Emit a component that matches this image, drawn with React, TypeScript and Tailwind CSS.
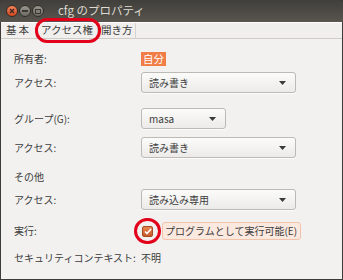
import type { ReactNode } from 'react';

const FONT = { fontFamily: '"Noto Sans CJK JP", "Noto Sans", sans-serif' };

function Dropdown({ value, width }: { value: string; width: string }) {
    return (
        <div
            className={`${width} h-[21px] flex items-center justify-between pl-[7px] pr-[9px] rounded-[3px] border border-[#bdb9b4] bg-gradient-to-b from-[#fbfbfa] to-[#ecebe9] shadow-[0_1px_0_rgba(255,255,255,0.8)]`}
        >
            <span className="text-[10px] text-[#3c3c3c] leading-none whitespace-nowrap">{value}</span>
            <svg width="7" height="4" viewBox="0 0 7 4">
                <path d="M0 0h7L3.5 4z" fill="#3a3a3a" />
            </svg>
        </div>
    );
}

function Row({ label, children, className = '' }: { label: string; children?: ReactNode; className?: string }) {
    return (
        <div className={`flex items-center ${className}`}>
            <span className="w-[127px] shrink-0 text-[10px] text-[#3c3c3c] leading-none whitespace-nowrap">{label}</span>
            {children}
        </div>
    );
}

export default function App() {
    return (
        <div style={FONT} className="relative w-[343px] h-[280px] bg-[#3c3b37] p-[1px] pt-0 overflow-hidden">
            {/* title bar */}
            <div className="h-[22px] flex items-center bg-gradient-to-b from-[#403f3b] to-[#58554e] rounded-t-[4px] -mx-[1px] px-[6px]">
                <div className="flex items-center gap-[1px]">
                    <span className="w-[12px] h-[12px] rounded-full bg-gradient-to-b from-[#f5845a] to-[#d2461c] border border-[#3a2a22] flex items-center justify-center">
                        <svg width="6" height="6" viewBox="0 0 6 6">
                            <path d="M1 1l4 4M5 1L1 5" stroke="#3b2a22" strokeWidth="1.4" />
                        </svg>
                    </span>
                    <span className="w-[12px] h-[12px] rounded-full bg-gradient-to-b from-[#9a968d] to-[#6d6a63] border border-[#2f2e2b] flex items-center justify-center">
                        <span className="w-[6px] h-[1.5px] bg-[#3a3935]" />
                    </span>
                    <span className="w-[12px] h-[12px] rounded-full bg-gradient-to-b from-[#9a968d] to-[#6d6a63] border border-[#2f2e2b] flex items-center justify-center">
                        <span className="w-[6px] h-[5px] border border-[#3a3935]" />
                    </span>
                </div>
                <span className="ml-[14px] text-[11.5px] text-[#dfdbd2] leading-none">cfg のプロパティ</span>
            </div>

            <div className="h-[257px] bg-[#f2f1f0] flex flex-col">
                {/* tabs */}
                <div className="h-[17px] flex items-center border-t border-white border-b border-b-[#cfccc8] bg-[#f0efed]">
                    <span className="px-[5px] text-[10.5px] text-[#3c3c3c] leading-none tracking-[2px]">基本</span>
                    <span className="w-px h-full bg-[#d6d3cf]" />
                    <span className="px-[4px] text-[10.5px] text-[#3c3c3c] leading-none">アクセス権</span>
                    <span className="w-px h-full bg-[#d6d3cf]" />
                    <span className="px-[3px] text-[10.5px] text-[#3c3c3c] leading-none">開き方</span>
                    <span className="w-px h-full bg-[#d6d3cf]" />
                </div>

                <div className="pl-[13px] flex flex-col">
                    <Row label="所有者:" className="mt-[13px] h-[14px]">
                        <span className="h-[14px] px-[2px] bg-[#f07c46] text-white text-[10.5px] leading-[14px]">自分</span>
                    </Row>
                    <Row label="アクセス:" className="mt-[6px]">
                        <Dropdown value="読み書き" width="w-[155px]" />
                    </Row>
                    <Row label="グループ(G):" className="mt-[15px]">
                        <Dropdown value="masa" width="w-[85px]" />
                    </Row>
                    <Row label="アクセス:" className="mt-[8px]">
                        <Dropdown value="読み書き" width="w-[155px]" />
                    </Row>
                    <Row label="その他" className="mt-[12px] h-[14px]" />
                    <Row label="アクセス:" className="mt-[5px]">
                        <Dropdown value="読み込み専用" width="w-[155px]" />
                    </Row>
                    <Row label="実行:" className="mt-[12px] h-[18px]">
                        <span className="ml-[1px] w-[11px] h-[11px] rounded-[2px] bg-gradient-to-b from-[#e8844f] to-[#c9592a] border border-[#a84a22] flex items-center justify-center">
                            <svg width="8" height="7" viewBox="0 0 8 7">
                                <path d="M1 3.5l2 2L7 1" fill="none" stroke="white" strokeWidth="1.6" />
                            </svg>
                        </span>
                        <span className="ml-[9px] h-[18px] pl-[2px] pr-[3px] flex items-center rounded-[3px] border border-[#f3c2ab] bg-[#fbe8df] text-[10px] text-[#3c3c3c] leading-none whitespace-nowrap">
                            プログラムとして実行可能(E)
                        </span>
                    </Row>
                    <Row label="セキュリティコンテキスト:" className="mt-[11px] h-[14px]">
                        <span className="text-[10px] text-[#3c3c3c] leading-none">不明</span>
                    </Row>
                </div>
            </div>

            {/* annotation highlights */}
            <div className="absolute left-[35px] top-[18px] w-[66px] h-[25px] rounded-[12px] border-[3px] border-[#e3001b]" />
            <div className="absolute left-[134px] top-[218px] w-[27px] h-[26px] rounded-full border-[3px] border-[#e3001b]" />
        </div>
    );
}
